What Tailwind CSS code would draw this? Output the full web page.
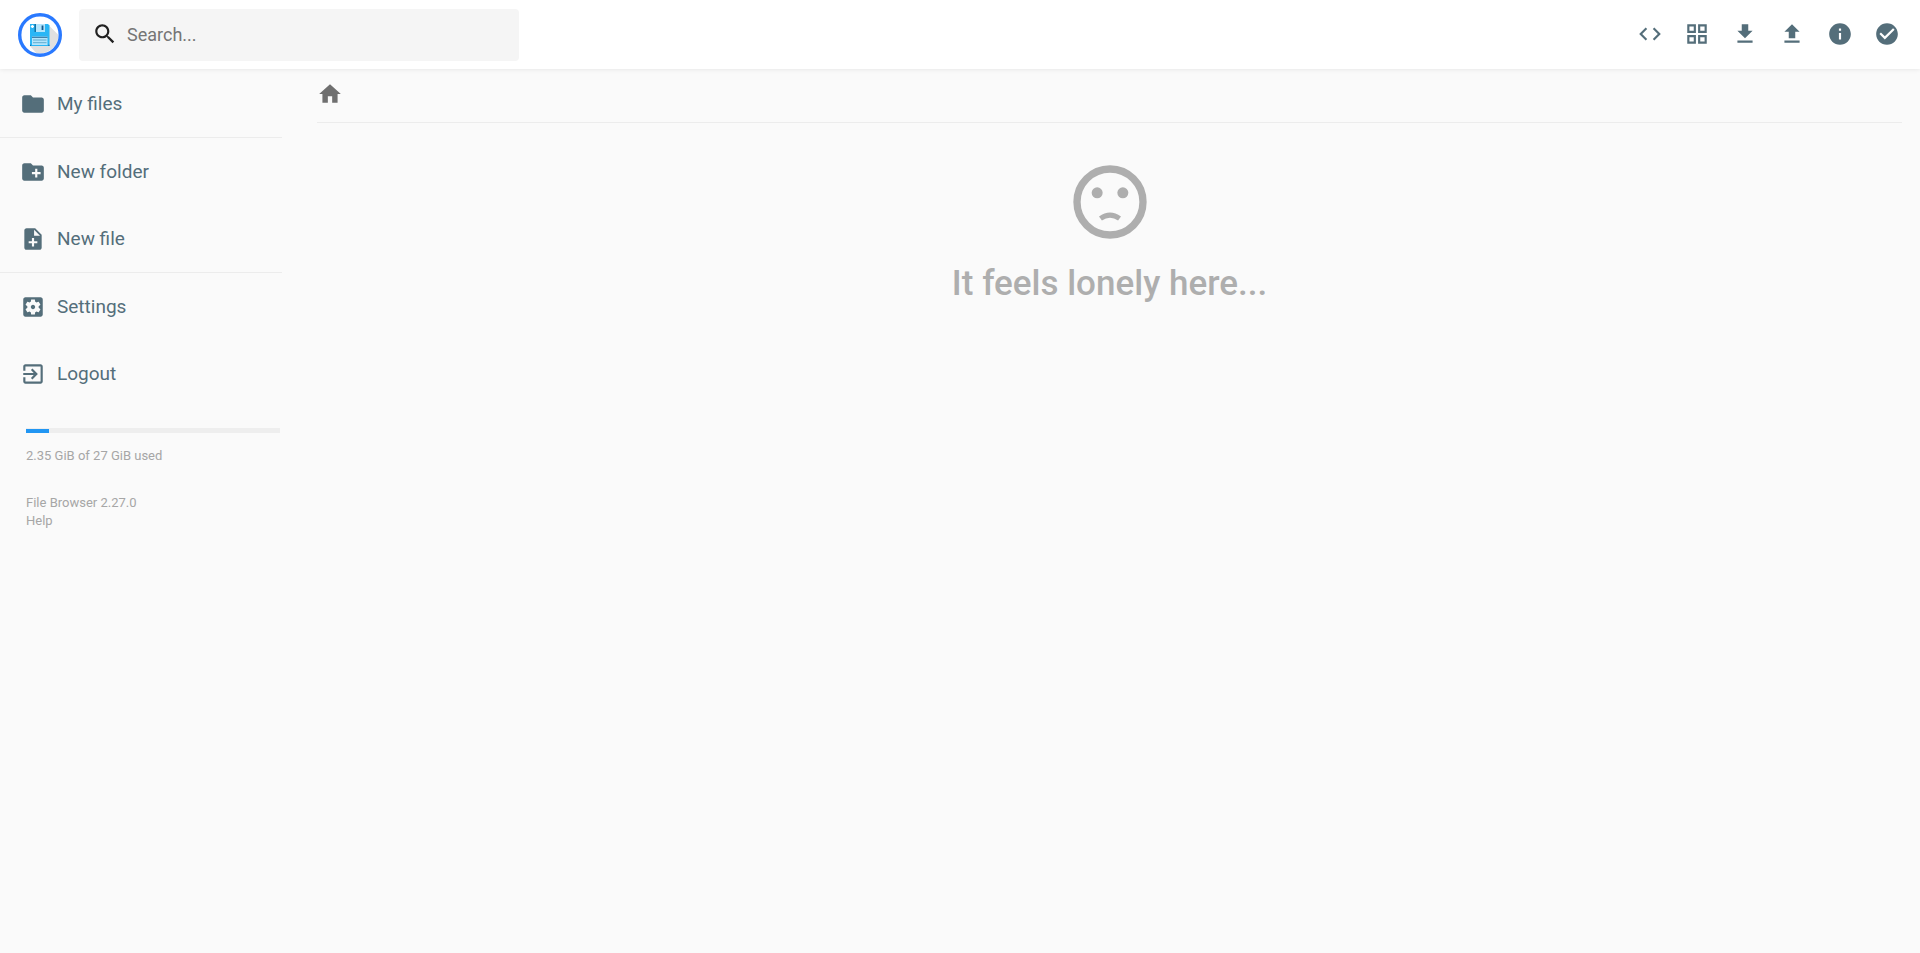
<!DOCTYPE html>
<html lang="en">
<head>
    <meta charset="UTF-8">
    <meta name="viewport" content="width=device-width, initial-scale=1.0">
    <title>My files - File Browser</title>
    <!-- TailwindCSS -->
    <script src="https://cdn.jsdelivr.net/npm/@tailwindcss/browser@4"></script>
</head>
<body class="min-h-screen bg-[#fafafa] font-['Roboto',sans-serif] text-[#546e7a]">
    <!-- Header -->
    <header class="relative flex h-[69px] items-center bg-white pl-[18px] pr-[9px] shadow-[0_0_5px_rgba(0,0,0,0.1)]">
        <svg class="mt-px h-11 w-11 shrink-0" viewBox="0 0 44 44" role="img" aria-label="File Browser">
            <circle cx="22" cy="22" r="20.4" fill="white"/>
            <path d="M31.5 13 L40.5 22 A18.7 18.7 0 0 1 18 40 L12 33 Z" fill="#e0e0e0"/>
            <path d="M12 11 H30 L31.5 12.5 V33 H12 Z" fill="#29b6f6"/>
            <path d="M12 31.8 H13.2 V33 H12 Z M30.3 31.8 H31.5 V33 H30.3 Z" fill="#1a6fa8"/>
            <rect x="16.5" y="11" width="1.5" height="8" fill="#1372a4"/>
            <rect x="18" y="11" width="9" height="8" fill="#b3e5fc"/>
            <rect x="23.6" y="12.5" width="1.8" height="4.5" fill="#14598c"/>
            <path d="M12.8 13.5 H16 M14.4 11.9 V15.1" stroke="white" stroke-width="1.4"/>
            <rect x="14" y="23.5" width="15.5" height="8.5" fill="#b3e5fc"/>
            <path d="M14 24.3 H29.5" stroke="#14598c" stroke-width="0.9"/>
            <path d="M15 27 H28.5 M15 29.7 H28.5" stroke="#4a9cc4" stroke-width="0.8"/>
            <circle cx="22" cy="22" r="20.3" fill="none" stroke="#2979ff" stroke-width="3.4"/>
        </svg>

        <!-- Search -->
        <label class="ml-[17px] flex h-[52px] w-[440px] items-center rounded bg-[#f5f5f5] px-[13px]">
            <svg class="mb-0.5 h-[26px] w-[26px] shrink-0 text-[#212121]" viewBox="0 0 24 24" fill="currentColor" aria-hidden="true">
                <path d="M15.5 14h-.79l-.28-.27C15.41 12.59 16 11.11 16 9.5 16 5.91 13.09 3 9.5 3S3 5.91 3 9.5 5.91 16 9.5 16c1.61 0 3.09-.59 4.23-1.57l.27.28v.79l5 4.99L20.49 19l-4.99-5zm-6 0C7.01 14 5 11.99 5 9.5S7.01 5 9.5 5 14 7.01 14 9.5 11.99 14 9.5 14z"/>
            </svg>
            <input type="text" aria-label="Search" placeholder="Search..." class="ml-[9px] w-full bg-transparent text-lg text-[#212121] placeholder-[#757575] outline-none">
        </label>

        <!-- Actions -->
        <div class="ml-auto grid w-[285px] grid-cols-6 pb-0.5">
            <button type="button" aria-label="Toggle shell" class="flex h-11 items-center justify-center">
                <svg class="h-[26px] w-[26px]" viewBox="0 0 24 24" fill="currentColor"><path d="M9.4 16.6L4.8 12l4.6-4.6L8 6l-6 6 6 6 1.4-1.4zm5.2 0l4.6-4.6-4.6-4.6L16 6l6 6-6 6-1.4-1.4z"/></svg>
            </button>
            <button type="button" aria-label="Switch view" class="flex h-11 items-center justify-center">
                <svg class="h-[26px] w-[26px]" viewBox="0 0 24 24" fill="currentColor"><path d="M3 3v8h8V3H3zm6 6H5V5h4v4zm-6 4v8h8v-8H3zm6 6H5v-4h4v4zm4-16v8h8V3h-8zm6 6h-4V5h4v4zm-6 4v8h8v-8h-8zm6 6h-4v-4h4v4z"/></svg>
            </button>
            <button type="button" aria-label="Download" class="flex h-11 items-center justify-center">
                <svg class="h-[26px] w-[26px]" viewBox="0 0 24 24" fill="currentColor"><path d="M19 9h-4V3H9v6H5l7 7 7-7zM5 18v2h14v-2H5z"/></svg>
            </button>
            <button type="button" aria-label="Upload" class="flex h-11 items-center justify-center">
                <svg class="h-[26px] w-[26px]" viewBox="0 0 24 24" fill="currentColor"><path d="M9 16h6v-6h4l-7-7-7 7h4zm-4 2h14v2H5z"/></svg>
            </button>
            <button type="button" aria-label="Info" class="flex h-11 items-center justify-center">
                <svg class="h-[26px] w-[26px]" viewBox="0 0 24 24" fill="currentColor"><path d="M12 2C6.48 2 2 6.48 2 12s4.48 10 10 10 10-4.48 10-10S17.52 2 12 2zm1 15h-2v-6h2v6zm0-8h-2V7h2v2z"/></svg>
            </button>
            <button type="button" aria-label="Select multiple" class="flex h-11 items-center justify-center">
                <svg class="h-[26px] w-[26px]" viewBox="0 0 24 24" fill="currentColor"><path d="M12 2C6.48 2 2 6.48 2 12s4.48 10 10 10 10-4.48 10-10S17.52 2 12 2zm-2 15l-5-5 1.41-1.41L10 14.17l7.59-7.59L19 8l-9 9z"/></svg>
            </button>
        </div>
    </header>

    <div class="flex">
        <!-- Sidebar -->
        <nav class="w-[282px] shrink-0 pt-px text-[19px]">
            <div>
                <button type="button" class="flex h-[67px] w-full items-center gap-[11px] pl-5">
                    <svg class="h-[26px] w-[26px]" viewBox="0 0 24 24" fill="currentColor"><path d="M10 4H4c-1.1 0-1.99.9-1.99 2L2 18c0 1.1.9 2 2 2h16c1.1 0 2-.9 2-2V8c0-1.1-.9-2-2-2h-8l-2-2z"/></svg>
                    <span class="pt-px">My files</span>
                </button>
            </div>
            <div class="border-t border-[#ececec]">
                <button type="button" class="flex h-[67px] w-full items-center gap-[11px] pl-5">
                    <svg class="h-[26px] w-[26px]" viewBox="0 0 24 24" fill="currentColor"><path d="M20 6h-8l-2-2H4c-1.11 0-1.99.89-1.99 2L2 18c0 1.11.89 2 2 2h16c1.11 0 2-.89 2-2V8c0-1.11-.89-2-2-2zm-1 8h-3v3h-2v-3h-3v-2h3V9h2v3h3v2z"/></svg>
                    <span class="pt-px">New folder</span>
                </button>
                <button type="button" class="flex h-[67px] w-full items-center gap-[11px] pl-5">
                    <svg class="h-[26px] w-[26px]" viewBox="0 0 24 24" fill="currentColor"><path d="M14 2H6c-1.1 0-1.99.9-1.99 2L4 20c0 1.1.89 2 1.99 2H18c1.1 0 2-.9 2-2V8l-6-6zm2 14h-3v3h-2v-3H8v-2h3v-3h2v3h3v2zm-3-7V3.5L18.5 9H13z"/></svg>
                    <span class="pt-px">New file</span>
                </button>
            </div>
            <div class="border-t border-[#ececec]">
                <button type="button" class="flex h-[67px] w-full items-center gap-[11px] pl-5">
                    <svg class="h-[26px] w-[26px]" viewBox="0 0 24 24" fill="currentColor"><path d="M12 10c-1.1 0-2 .9-2 2s.9 2 2 2 2-.9 2-2-.9-2-2-2zm7-7H5c-1.11 0-2 .9-2 2v14c0 1.1.89 2 2 2h14c1.11 0 2-.9 2-2V5c0-1.1-.89-2-2-2zm-1.75 9c0 .23-.02.46-.05.68l1.48 1.16c.13.11.17.3.08.45l-1.4 2.42c-.09.15-.27.21-.43.15l-1.74-.7c-.36.28-.76.51-1.18.69l-.26 1.85c-.03.17-.18.3-.35.3h-2.8c-.17 0-.32-.13-.35-.29l-.26-1.85c-.43-.18-.82-.41-1.18-.69l-1.74.7c-.16.06-.34 0-.43-.15l-1.4-2.42c-.09-.15-.05-.34.08-.45l1.48-1.16c-.03-.23-.05-.46-.05-.69 0-.23.02-.46.05-.68l-1.48-1.16c-.13-.11-.17-.3-.08-.45l1.4-2.42c.09-.15.27-.21.43-.15l1.74.7c.36-.28.76-.51 1.18-.69l.26-1.85c.03-.17.18-.3.35-.3h2.8c.17 0 .32.13.35.29l.26 1.85c.43.18.82.41 1.18.69l1.74-.7c.16-.06.34 0 .43.15l1.4 2.42c.09.15.05.34-.08.45l-1.48 1.16c.03.23.05.46.05.69z"/></svg>
                    <span class="pt-px">Settings</span>
                </button>
                <button type="button" class="flex h-[67px] w-full items-center gap-[11px] pl-5">
                    <svg class="h-[26px] w-[26px]" viewBox="0 0 24 24" fill="currentColor"><path d="M10.09 15.59L11.5 17l5-5-5-5-1.41 1.41L12.67 11H3v2h9.67l-2.58 2.59zM19 3H5c-1.11 0-2 .9-2 2v4h2V5h14v14H5v-4H3v4c0 1.1.89 2 2 2h14c1.1 0 2-.9 2-2V5c0-1.1-.9-2-2-2z"/></svg>
                    <span class="pt-px">Logout</span>
                </button>
            </div>

            <!-- Disk usage -->
            <div class="ml-[26px] mr-0.5 mt-[21px] text-[13px] leading-[18px] text-[#a6a6a6]">
                <div class="h-[5px] bg-[#eeeeee] pt-px">
                    <div class="h-1 bg-[#2196f3]" style="width: 9%"></div>
                </div>
                <p class="mt-3.5">2.35 GiB of 27 GiB used</p>
                <p class="mt-[29px]">File Browser 2.27.0</p>
                <a href="#" class="block">Help</a>
            </div>
        </nav>

        <!-- Listing -->
        <main class="ml-[35px] mr-[18px] flex-1">
            <div class="flex h-[54px] items-start border-b border-[#ececec] pt-3">
                <a href="#" aria-label="Home" class="text-[#6f6f6f]">
                    <svg class="h-[26px] w-[26px]" viewBox="0 0 24 24" fill="currentColor"><path d="M10 20v-6h4v6h5v-8h3L12 3 2 12h3v8z"/></svg>
                </a>
            </div>
            <h2 class="mt-[35px] flex flex-col items-center text-[35px] leading-10 font-medium text-[#aeaeae]">
                <svg class="h-[88px] w-[88px]" viewBox="0 0 24 24" fill="currentColor" aria-hidden="true">
                    <circle cx="12" cy="12" r="9" fill="none" stroke="currentColor" stroke-width="2"/>
                    <circle cx="8.5" cy="9.5" r="1.5"/>
                    <circle cx="15.5" cy="9.5" r="1.5"/>
                    <path d="M9.4 16.5 Q12 14.7 14.6 16.5" fill="none" stroke="currentColor" stroke-width="1.4"/>
                </svg>
                <span class="mt-[18px]">It feels lonely here...</span>
            </h2>
        </main>
    </div>
</body>
</html>
